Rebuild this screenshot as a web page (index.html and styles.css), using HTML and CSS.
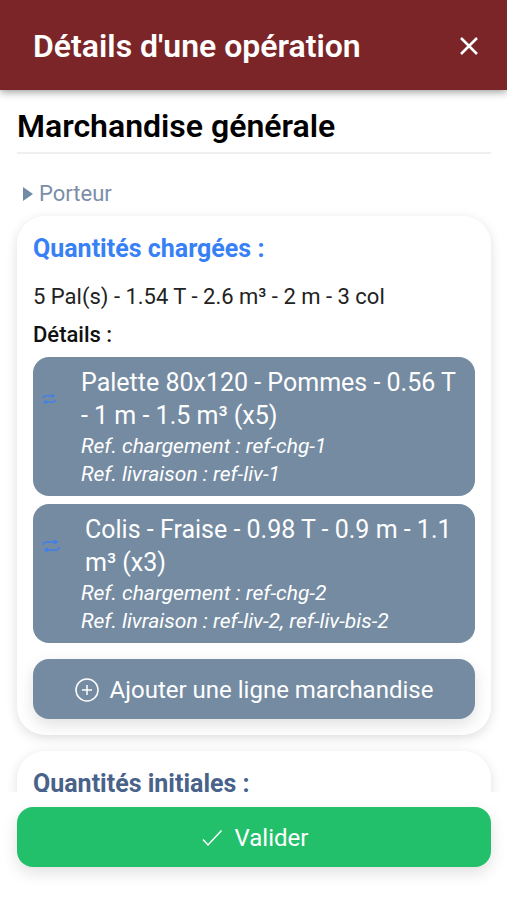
FILE: index.html
```html
<!DOCTYPE html>
<html lang="fr">
<head>
<meta charset="utf-8">
<meta name="viewport" content="width=device-width, initial-scale=1">
<title>Détails d'une opération</title>
<link rel="stylesheet" href="styles.css">
</head>
<body>
<header class="topbar">
  <h1 class="topbar-title">Détails d'une opération</h1>
  <button class="close" type="button" aria-label="Fermer">
    <svg width="20" height="20" viewBox="0 0 20 20"><path d="M2 2L18 18M18 2L2 18"/></svg>
  </button>
</header>
<main class="content">
  <h2 class="section-title">Marchandise générale</h2>
  <details class="carrier">
    <summary class="carrier-label"><svg class="caret" width="10" height="16" viewBox="0 0 10 16"><path d="M0 1L10 8L0 15Z"/></svg>Porteur</summary>
  </details>
  <section class="card">
    <h3 class="card-title card-title-loaded">Quantités chargées :</h3>
    <p class="summary-line">5 Pal(s) - 1.54 T - 2.6 m³ - 2 m - 3 col</p>
    <h4 class="details-label">Détails :</h4>
    <ul class="items">
      <li class="item">
        <div class="item-head">
          <svg class="swap swap-small" viewBox="0 0 20 16"><path d="M2 7Q2 4 6 4H16M13 2L16 4L13 6M18 9Q18 12 14 12H4M7 10L4 12L7 14"/></svg>
          <p class="item-name">Palette 80x120 - Pommes - 0.56 T - 1 m - 1.5 m³ (x5)</p>
        </div>
        <p class="item-ref">Ref. chargement : ref-chg-1</p>
        <p class="item-ref">Ref. livraison : ref-liv-1</p>
      </li>
      <li class="item">
        <div class="item-head">
          <svg class="swap" viewBox="0 0 20 16"><path d="M2 7Q2 4 6 4H16M13 2L16 4L13 6M18 9Q18 12 14 12H4M7 10L4 12L7 14"/></svg>
          <p class="item-name">Colis - Fraise - 0.98 T - 0.9 m - 1.1 m³ (x3)</p>
        </div>
        <p class="item-ref">Ref. chargement : ref-chg-2</p>
        <p class="item-ref">Ref. livraison : ref-liv-2, ref-liv-bis-2</p>
      </li>
    </ul>
    <button class="action action-add" type="button">
      <svg width="24" height="24" viewBox="0 0 24 24"><circle cx="12" cy="12" r="11"/><path d="M12 7V17M7 12H17"/></svg>
      Ajouter une ligne marchandise
    </button>
  </section>
  <section class="card">
    <h3 class="card-title">Quantités initiales :</h3>
  </section>
</main>
<footer class="bottom">
  <button class="action action-validate" type="button">
    <svg width="24" height="24" viewBox="0 0 24 24"><path d="M3 13.500L8 19L21.500 4.500"/></svg>
    Valider
  </button>
</footer>
</body>
</html>
```
FILE: styles.css
```css
* {
  box-sizing: border-box;
  margin: 0;
}

body {
  display: flex;
  flex-direction: column;
  height: 100vh;
  background: #fff;
  color: #222;
  font-family: Roboto, "Liberation Sans", sans-serif;
}

svg {
  flex: none;
  fill: none;
  stroke: currentColor;
}

button {
  border: 0;
  font: inherit;
  cursor: pointer;
}

.topbar {
  display: flex;
  align-items: center;
  justify-content: space-between;
  padding: 24px 28px 22px 33px;
  background: #7b2528;
  color: #fff;
  box-shadow: 0 2px 8px rgba(0, 0, 0, 0.4);
  z-index: 1;
}

.topbar-title {
  font-size: 32px;
  font-weight: 600;
  line-height: 44px;
}

.close {
  display: flex;
  padding: 0;
  background: none;
  color: #fff;
  stroke-width: 2.5;
}

.content {
  flex: 1;
  min-height: 0;
  overflow: hidden;
  padding: 14px 16px 0 17px;
}

.section-title {
  padding-bottom: 4px;
  border-bottom: 2px solid #efefef;
  color: #000;
  font-size: 32px;
  font-weight: 600;
  line-height: 44px;
}

.carrier {
  padding: 24px 0 6px 6px;
  color: #7a8ea8;
}

.carrier-label {
  display: flex;
  align-items: center;
  gap: 6px;
  font-size: 22px;
  line-height: 32px;
  list-style: none;
}

.caret {
  fill: #718aa5;
  stroke: none;
}

.card {
  margin-bottom: 16px;
  padding: 16px;
  border-radius: 28px;
  background: #fff;
  box-shadow: 0 3px 12px rgba(0, 0, 0, 0.13);
}

.card-title {
  color: #48628a;
  font-size: 25px;
  font-weight: 700;
  line-height: 33px;
}

.card-title-loaded {
  color: #3880f6;
}

.summary-line {
  margin-top: 16px;
  font-size: 22px;
  line-height: 32px;
}

.details-label {
  margin-top: 6px;
  color: #111;
  font-size: 22px;
  font-weight: 500;
  line-height: 32px;
}

.items {
  display: grid;
  gap: 8px;
  padding: 0;
  margin: 6px 0 16px;
  list-style: none;
}

.item {
  padding: 9px 8px 8px;
  border-radius: 16px;
  background: #758ba2;
  color: #fff;
}

.item-head {
  display: flex;
  align-items: center;
  gap: 24px;
}

.swap {
  width: 20px;
  height: 16px;
  color: #3d7ff0;
  stroke-width: 1.5;
}

.swap-small {
  width: 16px;
}

.item-name {
  font-size: 25px;
  line-height: 33px;
}

.item-ref {
  padding-left: 40px;
  font-size: 21px;
  font-style: italic;
  line-height: 28px;
}

.action {
  display: flex;
  align-items: center;
  justify-content: center;
  gap: 11px;
  width: 100%;
  padding: 15px 14px 13px;
  border-radius: 16px;
  color: #fff;
  font-size: 24px;
  line-height: 32px;
  box-shadow: 0 6px 16px rgba(0, 0, 0, 0.12);
  stroke-width: 1.5;
}

.action-add {
  background: #758ba2;
}

.action-validate {
  background: #22c06b;
}

.bottom {
  padding: 15px 16px 33px 17px;
  background: #fff;
  z-index: 1;
}
```
